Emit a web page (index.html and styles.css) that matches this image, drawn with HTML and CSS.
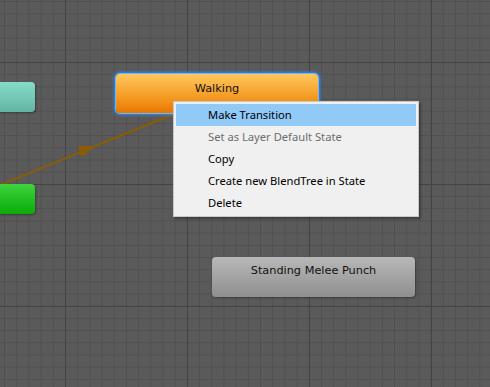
FILE: index.html
```html
<!DOCTYPE html>
<html lang="en">
<head>
    <meta charset="UTF-8">
    <title>Animator</title>
    <link rel="stylesheet" href="styles.css">
</head>
<body>
    <div class="graph">
        <svg class="links" width="490" height="387" viewBox="0 0 490 387">
            <line x1="0" y1="185" x2="176" y2="113" stroke="#8a5c06" stroke-width="2"/>
            <polygon points="96,146 78,146 81,157" fill="#8a5c06"/>
        </svg>

        <div class="node teal"></div>
        <div class="node green"></div>
        <div class="node orange selected">Walking</div>
        <div class="node grey punch">Standing Melee Punch</div>

        <ul class="menu">
            <li class="active">Make Transition</li>
            <li class="disabled">Set as Layer Default State</li>
            <li>Copy</li>
            <li>Create new BlendTree in State</li>
            <li>Delete</li>
        </ul>
    </div>
</body>
</html>
```

FILE: styles.css
```css
body {
    margin: 0;
    overflow: hidden;
}

.graph {
    position: relative;
    width: 490px;
    height: 387px;
    background-color: #5a5a5a;
    background-image:
        linear-gradient(to right, #444 1px, transparent 1px),
        linear-gradient(to bottom, #444 1px, transparent 1px),
        linear-gradient(to right, #505050 1px, transparent 1px),
        linear-gradient(to bottom, #505050 1px, transparent 1px);
    background-size: 122px 122px, 122px 122px, 12.2px 12.2px, 12.2px 12.2px;
    background-position: 65px 62px, 65px 62px, 65px 62px, 65px 62px;
}

.links {
    position: absolute;
    left: 0;
    top: 0;
}

.node {
    position: absolute;
    box-sizing: border-box;
    border-radius: 4px;
    font-family: "DejaVu Sans", Verdana, sans-serif;
    font-size: 11.3px;
    color: #111;
    text-align: center;
    padding-top: 7px;
    box-shadow: 1px 1px 2px rgba(0, 0, 0, 0.35);
}

.teal {
    left: -10px;
    top: 82px;
    width: 45px;
    height: 30px;
    background: linear-gradient(#86dcc8, #63b5a3);
}

.green {
    left: -10px;
    top: 184px;
    width: 45px;
    height: 30px;
    background: linear-gradient(#3ed43e, #0aaa0a);
}

.orange {
    left: 116px;
    top: 74px;
    width: 202px;
    height: 39px;
    padding-top: 8px;
    background: linear-gradient(#ffc85e, #f49a22 60%, #e97600);
}

.selected {
    box-shadow: 0 0 0 1px #6fb8ff, 0 0 3px 2px #2e8cf0;
}

.grey {
    left: 212px;
    top: 257px;
    width: 203px;
    height: 40px;
    background: linear-gradient(#b8b8b8, #8f8f8f);
}

.menu {
    position: absolute;
    left: 173px;
    top: 101px;
    width: 246px;
    box-sizing: border-box;
    margin: 0;
    padding: 2px;
    list-style: none;
    background: #f0f0f0;
    border: 1px solid #c8c8c8;
    box-shadow: 2px 2px 2px rgba(0, 0, 0, 0.3);
    font-family: "Noto Sans", "Open Sans", sans-serif;
    font-size: 11.2px;
}

.menu li {
    height: 22px;
    line-height: 22px;
    padding-left: 32px;
    color: #000;
}

.menu li.active {
    background: #91c9f7;
}

.menu li.disabled {
    color: #6d6d6d;
}
```
